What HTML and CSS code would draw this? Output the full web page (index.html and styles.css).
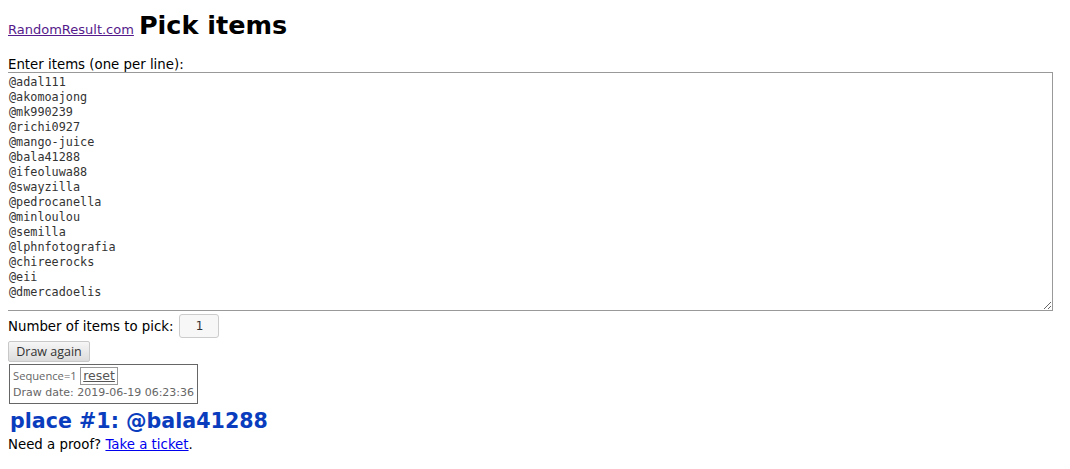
FILE: index.html
```html
<!DOCTYPE html>
<html lang="en">
  <head>
    <meta charset="UTF-8" />
    <title>Pick items</title>
    <link rel="stylesheet" href="styles.css">
  </head>
  <body>
    <div class="header">
      <a href="#" class="site">RandomResult.com</a>
      <h1>Pick items</h1>
    </div>

    <form class="picker">
      <label for="items">Enter items (one per line):</label>
      <textarea id="items" name="items">@adal111
@akomoajong
@mk990239
@richi0927
@mango-juice
@bala41288
@ifeoluwa88
@swayzilla
@pedrocanella
@minloulou
@semilla
@lphnfotografia
@chireerocks
@eii
@dmercadoelis</textarea>

      <div class="count-row">
        <label for="count">Number of items to pick:</label>
        <input type="text" id="count" name="count" value="1" />
      </div>

      <button type="button" class="draw">Draw again</button>
    </form>

    <div class="sequence">
      <div><span class="seq">Sequence=1</span> <a href="#" class="reset">reset</a></div>
      <div>Draw date: 2019-06-19 06:23:36</div>
    </div>

    <div class="result">place #1: @bala41288</div>
    <p class="proof">Need a proof? <a href="#">Take a ticket</a>.</p>
  </body>
</html>
```

FILE: styles.css
```css
body {
  font-family: "DejaVu Sans", sans-serif;
  font-size: 13.33px;
  margin: 8px;
  color: #000;
}
.header {
  display: flex;
  align-items: baseline;
  gap: 5px;
  margin-top: 2px;
}
.site {
  color: #551a8b;
  font-size: 13px;
}
h1 {
  font-size: 25.5px;
  margin: 0;
}
.picker {
  margin-top: 17px;
}
.picker label {
  display: block;
}
textarea {
  display: block;
  box-sizing: border-box;
  width: 1046px;
  height: 239px;
  margin: 0 0 0 -1px;
  padding: 2px 1px;
  border: 1px solid #999;
  font-family: "DejaVu Sans Mono", monospace;
  font-size: 11.8px;
  line-height: 15px;
  color: #333;
}
.count-row {
  display: flex;
  align-items: center;
  gap: 6px;
  margin-top: 3px;
}
.count-row label {
  display: inline;
}
#count {
  box-sizing: border-box;
  width: 40px;
  height: 24px;
  border: 1px solid #ccc;
  border-radius: 3px;
  background: #f7f7f7;
  text-align: center;
  font-family: "DejaVu Sans", sans-serif;
  font-size: 12px;
  color: #333;
}
.draw {
  display: block;
  box-sizing: border-box;
  margin-top: 3px;
  width: 82px;
  height: 21px;
  padding: 0;
  border: 1px solid #c8c8c8;
  border-radius: 2px;
  background: linear-gradient(#f6f6f6, #dcdcdc);
  font-family: "Open Sans", sans-serif;
  font-size: 12.5px;
  color: #333;
}
.sequence {
  display: inline-block;
  margin: 2px 0 0 1px;
  padding: 2px 3px;
  border: 1px solid #666;
  font-size: 11px;
  color: #666;
  line-height: 16px;
}
.seq {
  font-family: "Open Sans", sans-serif;
  font-size: 11.2px;
}
.reset {
  display: inline-block;
  padding: 0 2px;
  border: 1px solid #999;
  color: #555;
  font-size: 12.5px;
  line-height: 16px;
}
.result {
  margin-top: 5px;
  padding-left: 2px;
  font-size: 20.6px;
  font-weight: bold;
  color: #0a3dbe;
}
.proof {
  margin: 4px 0 0;
}
.proof a {
  color: #0000ee;
}
```
